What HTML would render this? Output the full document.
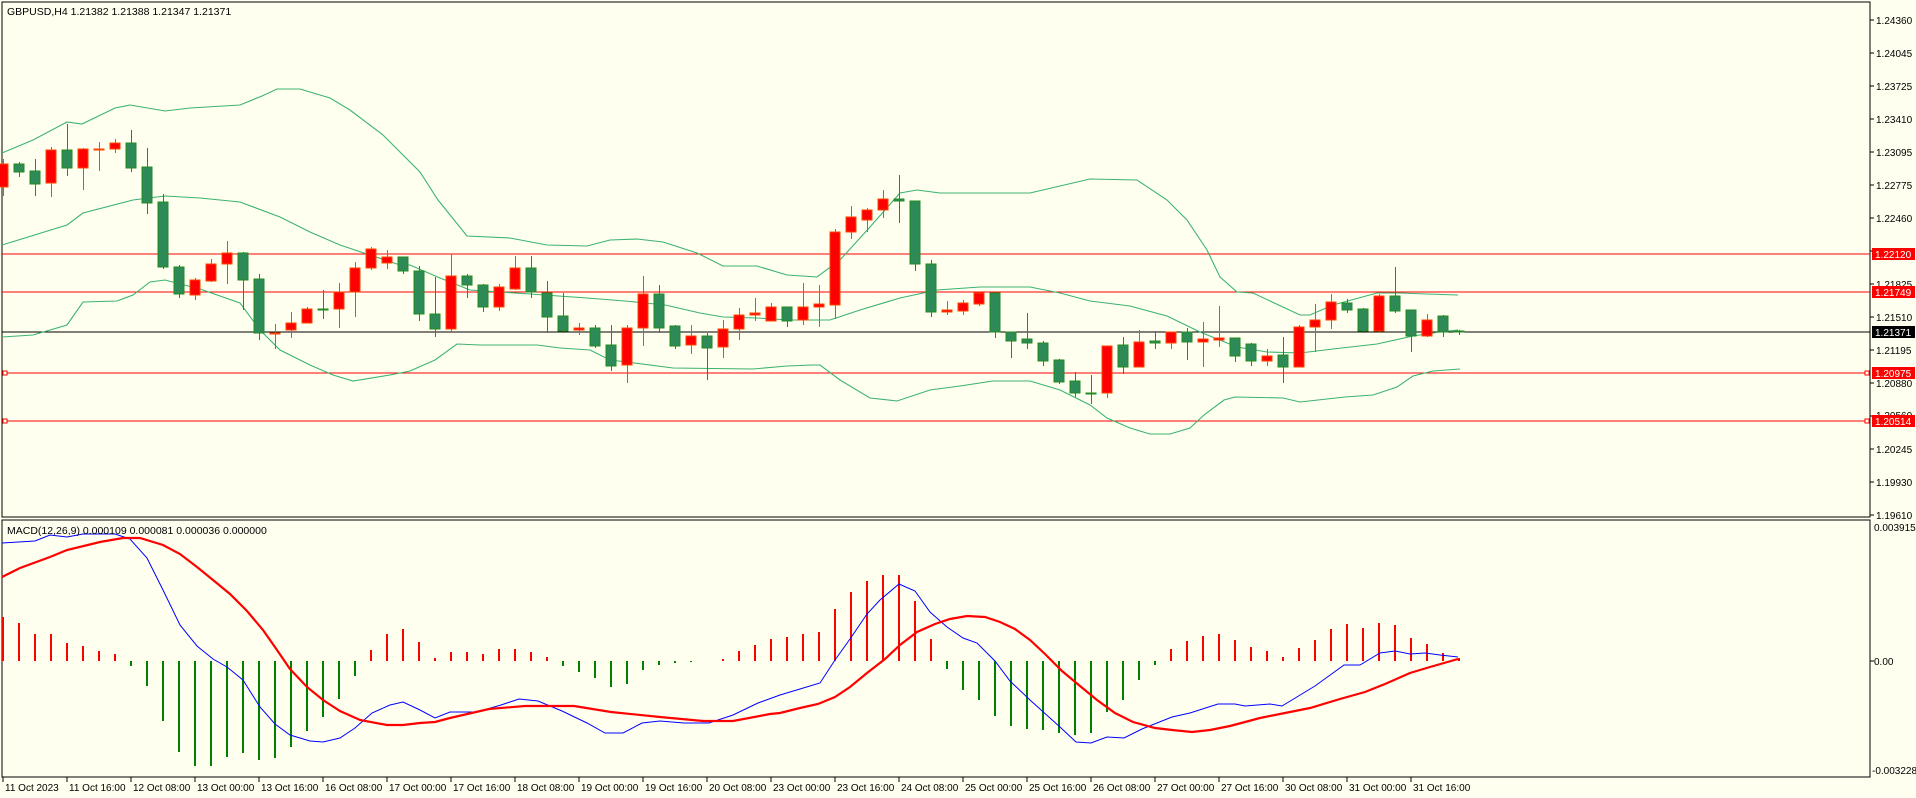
<!DOCTYPE html>
<html><head><meta charset="utf-8"><style>
html,body{margin:0;padding:0;background:#FFFFF0;}
svg{display:block;}
text{font-family:"Liberation Sans","DejaVu Sans",sans-serif;font-size:10.5px;fill:#000;}
.ax{font-size:10px;}
</style></head><body>
<svg width="1916" height="798" viewBox="0 0 1916 798" xmlns="http://www.w3.org/2000/svg">
<rect width="1916" height="798" fill="#FFFFF0"/>
<g fill="none" stroke="#000" stroke-width="1.2" shape-rendering="crispEdges">
<rect x="2" y="2" width="1868" height="515"/>
<rect x="2" y="520" width="1868" height="257"/>
</g>
<g stroke="#000" shape-rendering="crispEdges">
<line x1="1870" y1="20" x2="1874" y2="20"/><line x1="1870" y1="53" x2="1874" y2="53"/><line x1="1870" y1="86" x2="1874" y2="86"/><line x1="1870" y1="119" x2="1874" y2="119"/><line x1="1870" y1="152" x2="1874" y2="152"/><line x1="1870" y1="185" x2="1874" y2="185"/><line x1="1870" y1="218" x2="1874" y2="218"/><line x1="1870" y1="251" x2="1874" y2="251"/><line x1="1870" y1="284" x2="1874" y2="284"/><line x1="1870" y1="317" x2="1874" y2="317"/><line x1="1870" y1="350" x2="1874" y2="350"/><line x1="1870" y1="383" x2="1874" y2="383"/><line x1="1870" y1="416" x2="1874" y2="416"/><line x1="1870" y1="449" x2="1874" y2="449"/><line x1="1870" y1="482" x2="1874" y2="482"/><line x1="1870" y1="515" x2="1874" y2="515"/>
<line x1="1870" y1="661" x2="1874" y2="661"/>
</g>
<g class="ax">
<text class="ax" x="1876" y="24">1.24360</text><text class="ax" x="1876" y="57">1.24045</text><text class="ax" x="1876" y="90">1.23725</text><text class="ax" x="1876" y="123">1.23410</text><text class="ax" x="1876" y="156">1.23095</text><text class="ax" x="1876" y="189">1.22775</text><text class="ax" x="1876" y="222">1.22460</text><text class="ax" x="1876" y="288">1.21825</text><text class="ax" x="1876" y="321">1.21510</text><text class="ax" x="1876" y="354">1.21195</text><text class="ax" x="1876" y="387">1.20880</text><text class="ax" x="1876" y="419">1.20560</text><text class="ax" x="1876" y="453">1.20245</text><text class="ax" x="1876" y="486">1.19930</text><text class="ax" x="1876" y="519">1.19610</text>
<text class="ax" x="1874" y="531">0.003915</text><text class="ax" x="1874" y="665">0.00</text><text class="ax" x="1872" y="774">-0.003228</text>
</g>
<g stroke="#FF0000" stroke-width="1.3" shape-rendering="crispEdges">
<line x1="2" y1="254" x2="1870" y2="254"/>
<line x1="2" y1="292" x2="1870" y2="292"/>
<line x1="2" y1="373" x2="1870" y2="373"/>
<line x1="2" y1="421" x2="1870" y2="421"/>
</g>
<line x1="2" y1="332" x2="1870" y2="332" stroke="#000" stroke-width="1.3" shape-rendering="crispEdges"/>
<g fill="#FFFFF0" stroke="#FF0000" shape-rendering="crispEdges">
<rect x="3" y="371" width="4" height="4"/><rect x="3" y="419" width="4" height="4"/>
<rect x="1865" y="371" width="4" height="4"/><rect x="1865" y="419" width="4" height="4"/>
</g>
<g shape-rendering="crispEdges">
<rect x="1872" y="248" width="43" height="12" fill="#FF0000"/>
<rect x="1872" y="286" width="43" height="12" fill="#FF0000"/>
<rect x="1872" y="326" width="43" height="12" fill="#000"/>
<rect x="1872" y="367" width="43" height="12" fill="#FF0000"/>
<rect x="1872" y="415" width="43" height="12" fill="#FF0000"/>
</g>
<g>
<text class="ax" x="1875" y="258" style="fill:#fff">1.22120</text>
<text class="ax" x="1875" y="296" style="fill:#fff">1.21749</text>
<text class="ax" x="1875" y="336" style="fill:#fff">1.21371</text>
<text class="ax" x="1875" y="377" style="fill:#fff">1.20975</text>
<text class="ax" x="1875" y="425" style="fill:#fff">1.20514</text>
</g>
<g fill="none" stroke="#3CB371" stroke-width="1.1">
<polyline points="2,153 33,140 67,122 82,124 115,108 130,105 165,111 190,108 240,105 262,96 277,89 300,89 330,98 350,110 383,135 420,172 438,200 467,236 510,238 547,245 587,246 610,240 637,239 663,242 697,253 723,266 757,266 787,275 817,277 840,260 870,227 900,193 917,190 940,193 1030,193 1090,179 1137,180 1167,200 1187,220 1207,250 1220,277 1237,292 1253,293 1300,315 1310,315 1333,305 1377,293 1400,293 1427,294 1458,295"/>
<polyline points="2,245 67,225 83,213 133,200 165,196 200,198 240,202 280,217 310,232 340,245 370,255 400,265 410,265 440,278 470,290 530,294 587,298 625,301 665,305 700,313 723,317 757,318 790,320 830,320 860,310 900,298 937,290 980,287 1030,287 1060,293 1090,301 1130,306 1167,316 1200,332 1237,347 1267,352 1300,353 1333,349 1377,344 1413,336 1440,332 1458,330"/>
<polyline points="2,337 33,335 67,325 83,302 117,301 133,295 150,282 165,280 200,289 240,303 260,330 280,350 310,365 333,375 353,381 390,375 410,371 435,360 457,344 480,345 537,345 560,348 590,350 610,360 627,362 673,368 753,369 787,366 813,365 820,365 840,380 870,398 897,401 930,390 960,386 993,381 1030,381 1060,390 1090,405 1107,418 1130,428 1150,434 1170,434 1190,428 1204,415 1224,400 1235,397 1283,398 1300,402 1345,397 1373,395 1397,387 1413,376 1433,371 1460,369"/>
</g>
<g shape-rendering="crispEdges" stroke-width="1.2">
<g stroke="#FF4500" fill="#FF0000">
<line x1="3.5" y1="159" x2="3.5" y2="196"/><rect x="-2" y="164" width="10" height="23"/>
<line x1="51.5" y1="147" x2="51.5" y2="197"/><rect x="46" y="150" width="10" height="33"/>
<line x1="83.5" y1="148" x2="83.5" y2="190"/><rect x="78" y="149" width="10" height="19"/>
<line x1="99.5" y1="142" x2="99.5" y2="171"/><rect x="94" y="149" width="10" height="1"/>
<line x1="115.5" y1="139" x2="115.5" y2="153"/><rect x="110" y="143" width="10" height="6"/>
<line x1="195.5" y1="278" x2="195.5" y2="300"/><rect x="190" y="280" width="10" height="15"/>
<line x1="211.5" y1="259" x2="211.5" y2="282"/><rect x="206" y="264" width="10" height="17"/>
<line x1="227.5" y1="241" x2="227.5" y2="284"/><rect x="222" y="253" width="10" height="11"/>
<line x1="275.5" y1="324" x2="275.5" y2="349"/><rect x="270" y="333" width="10" height="1"/>
<line x1="291.5" y1="312" x2="291.5" y2="338"/><rect x="286" y="323" width="10" height="7"/>
<line x1="307.5" y1="307" x2="307.5" y2="323"/><rect x="302" y="309" width="10" height="14"/>
<line x1="339.5" y1="283" x2="339.5" y2="328"/><rect x="334" y="292" width="10" height="17"/>
<line x1="355.5" y1="262" x2="355.5" y2="317"/><rect x="350" y="268" width="10" height="24"/>
<line x1="371.5" y1="247" x2="371.5" y2="270"/><rect x="366" y="249" width="10" height="19"/>
<line x1="387.5" y1="250" x2="387.5" y2="269"/><rect x="382" y="257" width="10" height="6"/>
<line x1="451.5" y1="254" x2="451.5" y2="333"/><rect x="446" y="276" width="10" height="53"/>
<line x1="499.5" y1="284" x2="499.5" y2="311"/><rect x="494" y="287" width="10" height="20"/>
<line x1="515.5" y1="256" x2="515.5" y2="290"/><rect x="510" y="268" width="10" height="21"/>
<line x1="579.5" y1="323" x2="579.5" y2="335"/><rect x="574" y="328" width="10" height="2"/>
<line x1="627.5" y1="325" x2="627.5" y2="383"/><rect x="622" y="328" width="10" height="37"/>
<line x1="643.5" y1="276" x2="643.5" y2="346"/><rect x="638" y="294" width="10" height="34"/>
<line x1="691.5" y1="325" x2="691.5" y2="354"/><rect x="686" y="336" width="10" height="9"/>
<line x1="723.5" y1="320" x2="723.5" y2="358"/><rect x="718" y="329" width="10" height="18"/>
<line x1="739.5" y1="308" x2="739.5" y2="340"/><rect x="734" y="315" width="10" height="14"/>
<line x1="755.5" y1="298" x2="755.5" y2="321"/><rect x="750" y="313" width="10" height="2"/>
<line x1="771.5" y1="303" x2="771.5" y2="321"/><rect x="766" y="307" width="10" height="14"/>
<line x1="803.5" y1="283" x2="803.5" y2="325"/><rect x="798" y="307" width="10" height="13"/>
<line x1="819.5" y1="285" x2="819.5" y2="327"/><rect x="814" y="304" width="10" height="3"/>
<line x1="835.5" y1="229" x2="835.5" y2="319"/><rect x="830" y="232" width="10" height="73"/>
<line x1="851.5" y1="206" x2="851.5" y2="239"/><rect x="846" y="217" width="10" height="15"/>
<line x1="867.5" y1="208" x2="867.5" y2="232"/><rect x="862" y="210" width="10" height="10"/>
<line x1="883.5" y1="190" x2="883.5" y2="218"/><rect x="878" y="199" width="10" height="11"/>
<line x1="947.5" y1="301" x2="947.5" y2="315"/><rect x="942" y="310" width="10" height="2"/>
<line x1="963.5" y1="300" x2="963.5" y2="315"/><rect x="958" y="303" width="10" height="8"/>
<line x1="979.5" y1="293" x2="979.5" y2="306"/><rect x="974" y="293" width="10" height="11"/>
<line x1="1107.5" y1="346" x2="1107.5" y2="398"/><rect x="1102" y="346" width="10" height="47"/>
<line x1="1139.5" y1="330" x2="1139.5" y2="367"/><rect x="1134" y="342" width="10" height="25"/>
<line x1="1171.5" y1="332" x2="1171.5" y2="349"/><rect x="1166" y="332" width="10" height="11"/>
<line x1="1203.5" y1="322" x2="1203.5" y2="367"/><rect x="1198" y="339" width="10" height="3"/>
<line x1="1219.5" y1="306" x2="1219.5" y2="347"/><rect x="1214" y="338" width="10" height="2"/>
<line x1="1267.5" y1="349" x2="1267.5" y2="366"/><rect x="1262" y="356" width="10" height="5"/>
<line x1="1299.5" y1="325" x2="1299.5" y2="367"/><rect x="1294" y="327" width="10" height="40"/>
<line x1="1315.5" y1="304" x2="1315.5" y2="352"/><rect x="1310" y="320" width="10" height="7"/>
<line x1="1331.5" y1="294" x2="1331.5" y2="329"/><rect x="1326" y="302" width="10" height="18"/>
<line x1="1379.5" y1="294" x2="1379.5" y2="332"/><rect x="1374" y="296" width="10" height="35"/>
<line x1="1427.5" y1="314" x2="1427.5" y2="337"/><rect x="1422" y="320" width="10" height="16"/>
</g>
<g stroke="#228B22" fill="#2E8B57">
<line x1="19.5" y1="162" x2="19.5" y2="177"/><rect x="14" y="164" width="10" height="8"/>
<line x1="35.5" y1="159" x2="35.5" y2="196"/><rect x="30" y="171" width="10" height="13"/>
<line x1="67.5" y1="124" x2="67.5" y2="176"/><rect x="62" y="150" width="10" height="18"/>
<line x1="131.5" y1="130" x2="131.5" y2="172"/><rect x="126" y="143" width="10" height="25"/>
<line x1="147.5" y1="148" x2="147.5" y2="214"/><rect x="142" y="167" width="10" height="36"/>
<line x1="163.5" y1="194" x2="163.5" y2="269"/><rect x="158" y="202" width="10" height="65"/>
<line x1="179.5" y1="265" x2="179.5" y2="298"/><rect x="174" y="267" width="10" height="27"/>
<line x1="243.5" y1="252" x2="243.5" y2="310"/><rect x="238" y="253" width="10" height="27"/>
<line x1="259.5" y1="274" x2="259.5" y2="340"/><rect x="254" y="279" width="10" height="54"/>
<line x1="323.5" y1="290" x2="323.5" y2="319"/><rect x="318" y="309" width="10" height="1"/>
<line x1="403.5" y1="257" x2="403.5" y2="274"/><rect x="398" y="257" width="10" height="14"/>
<line x1="419.5" y1="266" x2="419.5" y2="321"/><rect x="414" y="271" width="10" height="43"/>
<line x1="435.5" y1="277" x2="435.5" y2="337"/><rect x="430" y="314" width="10" height="15"/>
<line x1="467.5" y1="274" x2="467.5" y2="298"/><rect x="462" y="276" width="10" height="9"/>
<line x1="483.5" y1="284" x2="483.5" y2="312"/><rect x="478" y="285" width="10" height="22"/>
<line x1="531.5" y1="256" x2="531.5" y2="298"/><rect x="526" y="268" width="10" height="24"/>
<line x1="547.5" y1="281" x2="547.5" y2="333"/><rect x="542" y="293" width="10" height="24"/>
<line x1="563.5" y1="293" x2="563.5" y2="333"/><rect x="558" y="316" width="10" height="15"/>
<line x1="595.5" y1="325" x2="595.5" y2="348"/><rect x="590" y="328" width="10" height="18"/>
<line x1="611.5" y1="325" x2="611.5" y2="371"/><rect x="606" y="345" width="10" height="21"/>
<line x1="659.5" y1="285" x2="659.5" y2="333"/><rect x="654" y="294" width="10" height="34"/>
<line x1="675.5" y1="325" x2="675.5" y2="349"/><rect x="670" y="326" width="10" height="20"/>
<line x1="707.5" y1="333" x2="707.5" y2="380"/><rect x="702" y="336" width="10" height="12"/>
<line x1="787.5" y1="307" x2="787.5" y2="327"/><rect x="782" y="307" width="10" height="14"/>
<line x1="899.5" y1="175" x2="899.5" y2="223"/><rect x="894" y="199" width="10" height="2"/>
<line x1="915.5" y1="201" x2="915.5" y2="271"/><rect x="910" y="201" width="10" height="63"/>
<line x1="931.5" y1="260" x2="931.5" y2="317"/><rect x="926" y="264" width="10" height="48"/>
<line x1="995.5" y1="293" x2="995.5" y2="338"/><rect x="990" y="293" width="10" height="39"/>
<line x1="1011.5" y1="332" x2="1011.5" y2="358"/><rect x="1006" y="332" width="10" height="9"/>
<line x1="1027.5" y1="313" x2="1027.5" y2="349"/><rect x="1022" y="339" width="10" height="4"/>
<line x1="1043.5" y1="341" x2="1043.5" y2="366"/><rect x="1038" y="343" width="10" height="18"/>
<line x1="1059.5" y1="359" x2="1059.5" y2="384"/><rect x="1054" y="360" width="10" height="22"/>
<line x1="1075.5" y1="372" x2="1075.5" y2="397"/><rect x="1070" y="381" width="10" height="12"/>
<line x1="1091.5" y1="375" x2="1091.5" y2="404"/><rect x="1086" y="393" width="10" height="1"/>
<line x1="1123.5" y1="337" x2="1123.5" y2="374"/><rect x="1118" y="345" width="10" height="22"/>
<line x1="1155.5" y1="331" x2="1155.5" y2="349"/><rect x="1150" y="341" width="10" height="2"/>
<line x1="1187.5" y1="328" x2="1187.5" y2="360"/><rect x="1182" y="332" width="10" height="10"/>
<line x1="1235.5" y1="338" x2="1235.5" y2="362"/><rect x="1230" y="338" width="10" height="18"/>
<line x1="1251.5" y1="343" x2="1251.5" y2="366"/><rect x="1246" y="344" width="10" height="17"/>
<line x1="1283.5" y1="337" x2="1283.5" y2="383"/><rect x="1278" y="355" width="10" height="12"/>
<line x1="1347.5" y1="299" x2="1347.5" y2="313"/><rect x="1342" y="303" width="10" height="7"/>
<line x1="1363.5" y1="308" x2="1363.5" y2="333"/><rect x="1358" y="309" width="10" height="22"/>
<line x1="1395.5" y1="267" x2="1395.5" y2="313"/><rect x="1390" y="296" width="10" height="15"/>
<line x1="1411.5" y1="310" x2="1411.5" y2="352"/><rect x="1406" y="310" width="10" height="26"/>
<line x1="1443.5" y1="315" x2="1443.5" y2="337"/><rect x="1438" y="316" width="10" height="16"/>
<line x1="1459.5" y1="330" x2="1459.5" y2="335"/><rect x="1454" y="331" width="10" height="1"/>
</g>
</g>
<g stroke-width="2" shape-rendering="crispEdges">
<g stroke="#FF0000">
<line x1="3" y1="661" x2="3" y2="617"/><line x1="19" y1="661" x2="19" y2="623"/><line x1="35" y1="661" x2="35" y2="634"/><line x1="51" y1="661" x2="51" y2="634"/><line x1="67" y1="661" x2="67" y2="643"/><line x1="83" y1="661" x2="83" y2="646"/><line x1="99" y1="661" x2="99" y2="651"/><line x1="115" y1="661" x2="115" y2="654"/>
<line x1="371" y1="661" x2="371" y2="650"/><line x1="387" y1="661" x2="387" y2="634"/><line x1="403" y1="661" x2="403" y2="629"/><line x1="419" y1="661" x2="419" y2="642"/><line x1="435" y1="661" x2="435" y2="658"/><line x1="451" y1="661" x2="451" y2="652"/><line x1="467" y1="661" x2="467" y2="652"/><line x1="483" y1="661" x2="483" y2="654"/><line x1="499" y1="661" x2="499" y2="649"/><line x1="515" y1="661" x2="515" y2="649"/><line x1="531" y1="661" x2="531" y2="652"/><line x1="547" y1="661" x2="547" y2="657"/>
<line x1="723" y1="661" x2="723" y2="659"/><line x1="739" y1="661" x2="739" y2="651"/><line x1="755" y1="661" x2="755" y2="645"/><line x1="771" y1="661" x2="771" y2="639"/><line x1="787" y1="661" x2="787" y2="637"/><line x1="803" y1="661" x2="803" y2="634"/><line x1="819" y1="661" x2="819" y2="632"/><line x1="835" y1="661" x2="835" y2="609"/><line x1="851" y1="661" x2="851" y2="592"/><line x1="867" y1="661" x2="867" y2="581"/><line x1="883" y1="661" x2="883" y2="575"/><line x1="899" y1="661" x2="899" y2="575"/><line x1="915" y1="661" x2="915" y2="601"/><line x1="931" y1="661" x2="931" y2="639"/>
<line x1="1171" y1="661" x2="1171" y2="649"/><line x1="1187" y1="661" x2="1187" y2="641"/><line x1="1203" y1="661" x2="1203" y2="636"/><line x1="1219" y1="661" x2="1219" y2="634"/><line x1="1235" y1="661" x2="1235" y2="640"/><line x1="1251" y1="661" x2="1251" y2="647"/><line x1="1267" y1="661" x2="1267" y2="651"/><line x1="1283" y1="661" x2="1283" y2="657"/><line x1="1299" y1="661" x2="1299" y2="648"/><line x1="1315" y1="661" x2="1315" y2="640"/><line x1="1331" y1="661" x2="1331" y2="629"/><line x1="1347" y1="661" x2="1347" y2="624"/><line x1="1363" y1="661" x2="1363" y2="628"/><line x1="1379" y1="661" x2="1379" y2="623"/><line x1="1395" y1="661" x2="1395" y2="625"/><line x1="1411" y1="661" x2="1411" y2="638"/><line x1="1427" y1="661" x2="1427" y2="644"/><line x1="1443" y1="661" x2="1443" y2="653"/><line x1="1459" y1="661" x2="1459" y2="658"/>
</g>
<g stroke="#008000">
<line x1="131" y1="661" x2="131" y2="666"/><line x1="147" y1="661" x2="147" y2="686"/><line x1="163" y1="661" x2="163" y2="721"/><line x1="179" y1="661" x2="179" y2="752"/><line x1="195" y1="661" x2="195" y2="766"/><line x1="211" y1="661" x2="211" y2="766"/><line x1="227" y1="661" x2="227" y2="757"/><line x1="243" y1="661" x2="243" y2="753"/><line x1="259" y1="661" x2="259" y2="760"/><line x1="275" y1="661" x2="275" y2="758"/><line x1="291" y1="661" x2="291" y2="747"/><line x1="307" y1="661" x2="307" y2="731"/><line x1="323" y1="661" x2="323" y2="717"/><line x1="339" y1="661" x2="339" y2="699"/><line x1="355" y1="661" x2="355" y2="676"/>
<line x1="563" y1="661" x2="563" y2="666"/><line x1="579" y1="661" x2="579" y2="672"/><line x1="595" y1="661" x2="595" y2="678"/><line x1="611" y1="661" x2="611" y2="687"/><line x1="627" y1="661" x2="627" y2="684"/><line x1="643" y1="661" x2="643" y2="670"/><line x1="659" y1="661" x2="659" y2="665"/><line x1="675" y1="661" x2="675" y2="663"/><line x1="691" y1="661" x2="691" y2="662"/>
<line x1="947" y1="661" x2="947" y2="669"/><line x1="963" y1="661" x2="963" y2="690"/><line x1="979" y1="661" x2="979" y2="700"/><line x1="995" y1="661" x2="995" y2="716"/><line x1="1011" y1="661" x2="1011" y2="726"/><line x1="1027" y1="661" x2="1027" y2="729"/><line x1="1043" y1="661" x2="1043" y2="730"/><line x1="1059" y1="661" x2="1059" y2="733"/><line x1="1075" y1="661" x2="1075" y2="735"/><line x1="1091" y1="661" x2="1091" y2="733"/><line x1="1107" y1="661" x2="1107" y2="712"/><line x1="1123" y1="661" x2="1123" y2="700"/><line x1="1139" y1="661" x2="1139" y2="680"/><line x1="1155" y1="661" x2="1155" y2="665"/>
</g>
</g>
<polyline fill="none" stroke="#0000FF" stroke-width="1" points="2,543 35,541 50,535 67,537 83,534 115,534 130,539 147,558 163,590 180,625 197,646 213,659 227,667 243,680 260,707 275,724 290,735 310,741 323,742 340,738 355,728 372,713 390,705 403,702 420,710 435,718 450,712 477,712 501,705 519,699 538,701 562,711 587,723 605,733 623,733 642,723 660,721 684,723 709,723 733,715 758,703 780,695 800,689 820,683 835,660 850,639 867,614 880,600 899,584 915,591 930,612 947,627 963,638 977,643 995,661 1010,681 1030,700 1060,727 1076,742 1091,743 1107,737 1124,738 1142,729 1172,717 1190,713 1218,704 1235,704 1245,706 1270,704 1282,706 1315,686 1344,665 1360,665 1380,653 1395,651 1410,654 1425,653 1440,655 1458,657"/>
<polyline fill="none" stroke="#FF0000" stroke-width="2.2" points="2,577 20,568 50,557 67,550 100,542 123,538 140,538 163,545 180,554 197,567 213,580 230,594 247,611 263,630 277,650 290,669 307,687 323,700 340,711 360,720 387,725 403,725 420,723 435,722 450,718 489,709 525,706 574,706 611,712 660,717 703,721 733,721 770,714 780,713 800,708 818,704 835,697 850,687 867,673 885,659 900,645 917,632 935,624 950,619 967,616 985,617 1000,622 1015,629 1030,640 1045,654 1062,671 1080,686 1097,700 1115,713 1133,722 1155,728 1172,730 1192,732 1210,730 1230,726 1260,718 1290,712 1310,708 1340,699 1365,692 1385,684 1410,673 1430,667 1458,659"/>
<text x="7" y="15">GBPUSD,H4  1.21382 1.21388 1.21347 1.21371</text>
<text x="7" y="534">MACD(12,26,9) 0.000109 0.000081 0.000036 0.000000</text>
<g stroke="#000" shape-rendering="crispEdges">
<line x1="3" y1="777" x2="3" y2="782"/><line x1="67" y1="777" x2="67" y2="782"/><line x1="131" y1="777" x2="131" y2="782"/><line x1="195" y1="777" x2="195" y2="782"/><line x1="259" y1="777" x2="259" y2="782"/><line x1="323" y1="777" x2="323" y2="782"/><line x1="387" y1="777" x2="387" y2="782"/><line x1="451" y1="777" x2="451" y2="782"/><line x1="515" y1="777" x2="515" y2="782"/><line x1="579" y1="777" x2="579" y2="782"/><line x1="643" y1="777" x2="643" y2="782"/><line x1="707" y1="777" x2="707" y2="782"/><line x1="771" y1="777" x2="771" y2="782"/><line x1="835" y1="777" x2="835" y2="782"/><line x1="899" y1="777" x2="899" y2="782"/><line x1="963" y1="777" x2="963" y2="782"/><line x1="1027" y1="777" x2="1027" y2="782"/><line x1="1091" y1="777" x2="1091" y2="782"/><line x1="1155" y1="777" x2="1155" y2="782"/><line x1="1219" y1="777" x2="1219" y2="782"/><line x1="1283" y1="777" x2="1283" y2="782"/><line x1="1347" y1="777" x2="1347" y2="782"/><line x1="1411" y1="777" x2="1411" y2="782"/>
</g>
<g>
<text class="ax" x="5" y="791">11 Oct 2023</text>
<text class="ax" x="69" y="791">11 Oct 16:00</text>
<text class="ax" x="133" y="791">12 Oct 08:00</text>
<text class="ax" x="197" y="791">13 Oct 00:00</text>
<text class="ax" x="261" y="791">13 Oct 16:00</text>
<text class="ax" x="325" y="791">16 Oct 08:00</text>
<text class="ax" x="389" y="791">17 Oct 00:00</text>
<text class="ax" x="453" y="791">17 Oct 16:00</text>
<text class="ax" x="517" y="791">18 Oct 08:00</text>
<text class="ax" x="581" y="791">19 Oct 00:00</text>
<text class="ax" x="645" y="791">19 Oct 16:00</text>
<text class="ax" x="709" y="791">20 Oct 08:00</text>
<text class="ax" x="773" y="791">23 Oct 00:00</text>
<text class="ax" x="837" y="791">23 Oct 16:00</text>
<text class="ax" x="901" y="791">24 Oct 08:00</text>
<text class="ax" x="965" y="791">25 Oct 00:00</text>
<text class="ax" x="1029" y="791">25 Oct 16:00</text>
<text class="ax" x="1093" y="791">26 Oct 08:00</text>
<text class="ax" x="1157" y="791">27 Oct 00:00</text>
<text class="ax" x="1221" y="791">27 Oct 16:00</text>
<text class="ax" x="1285" y="791">30 Oct 08:00</text>
<text class="ax" x="1349" y="791">31 Oct 00:00</text>
<text class="ax" x="1413" y="791">31 Oct 16:00</text>
</g>
</svg>
</body></html>
